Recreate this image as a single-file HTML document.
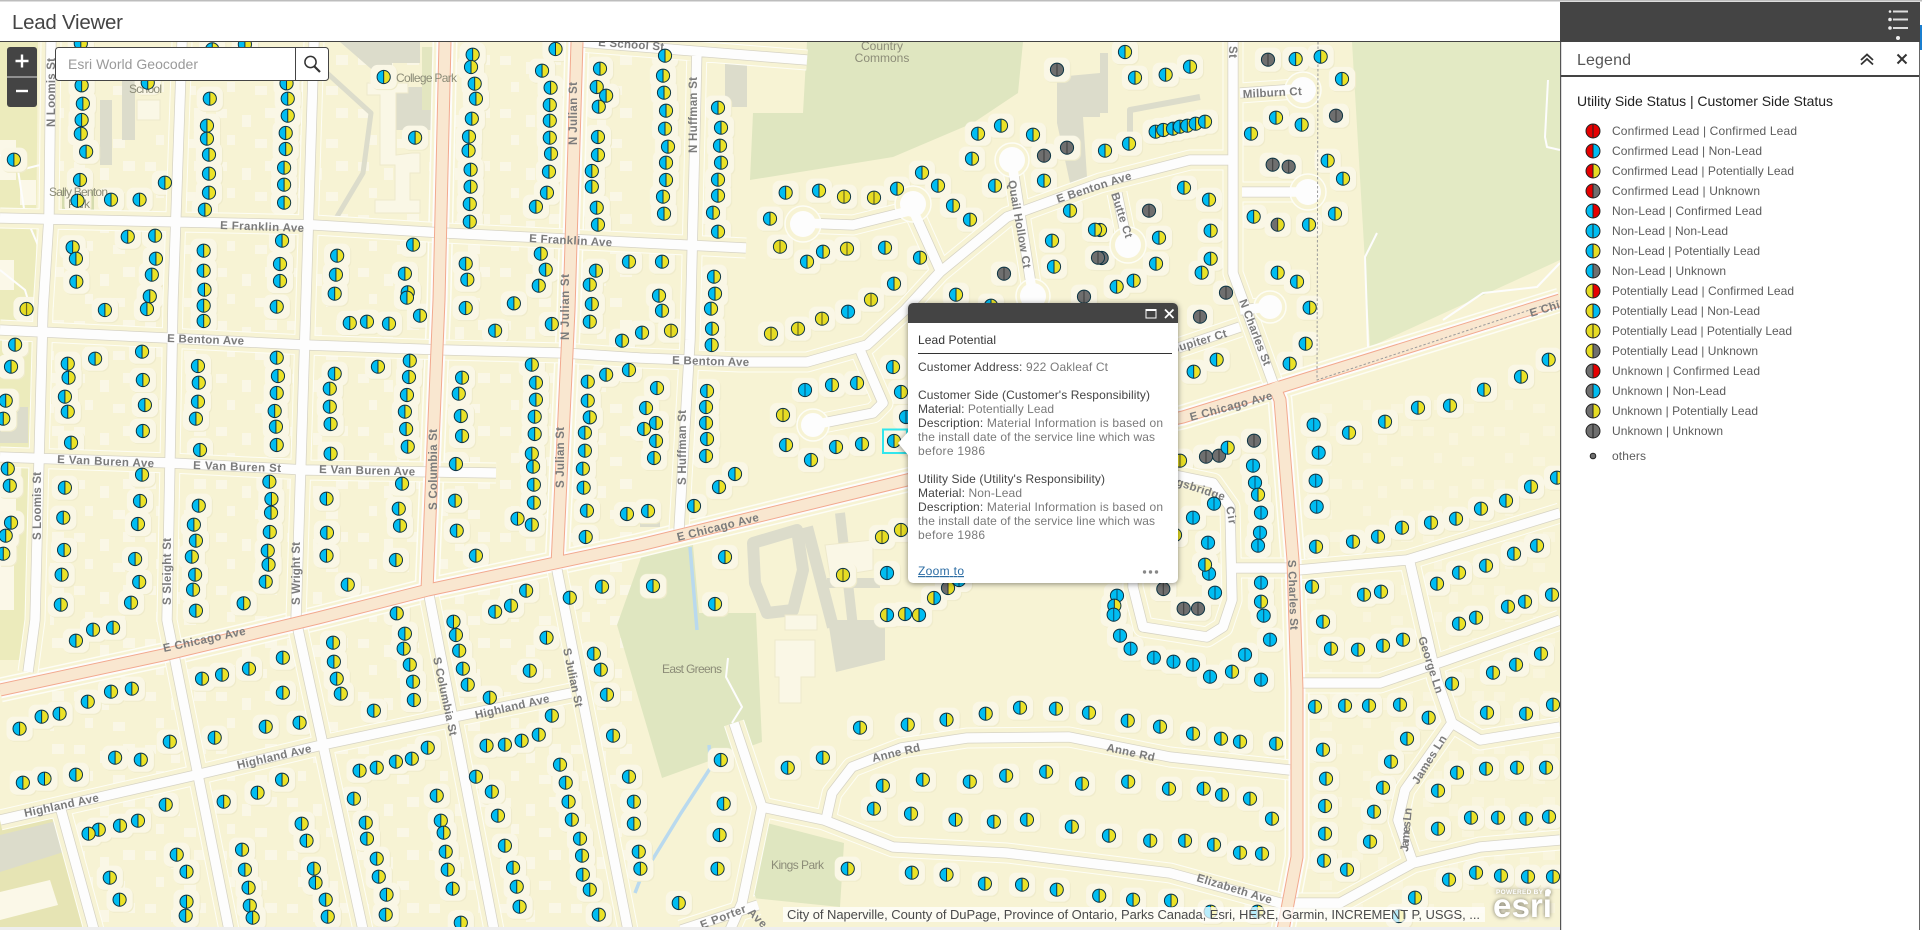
<!DOCTYPE html>
<html><head><meta charset="utf-8"><title>Lead Viewer</title>
<style>
html,body{margin:0;padding:0;background:#fff;overflow:hidden}
svg{display:block;font-family:"Liberation Sans",sans-serif}
polyline{fill:none;stroke:none}
.a{marker:url(#ma)}.b{marker:url(#mb)}.y{marker:url(#my)}.g{marker:url(#mg)}.e{marker:url(#me)}.f{marker:url(#mf)}
.p{marker:url(#pa)}.r{marker:url(#pb)}.q{marker:url(#py)}
.l{font-size:11.5px;font-weight:bold;fill:#7b7b7b}
.t{font-size:12px;fill:#8c8c78}
.d{font-size:12px;fill:#7a7a7a}
.d tspan{fill:#444}
.k{font-size:12px;fill:#444}
.g1{font-size:12px;fill:#5c5c5c}
</style></head><body>
<svg width="1922" height="930" viewBox="0 0 1922 930" xmlns="http://www.w3.org/2000/svg">
<defs>
<g id="O"><circle r="6.6" fill="none" stroke="#0c3444" stroke-width="1"/></g>
<path id="H" d="M0-6.6a6.6 6.6 0 0 1 0 13.2z"/>
<g id="A"><circle r="6.6" fill="#00bdf2"/><use href="#H" fill="#ebe228"/><path d="M0-6.6v13.2" stroke="#0c3444"/><use href="#O"/></g>
<g id="B"><circle r="6.6" fill="#00bdf2"/><path d="M0-6.6v13.2" stroke="#0b5f86" stroke-width="1.2"/><use href="#O"/></g>
<g id="Y"><circle r="6.6" fill="#e6dc24"/><path d="M0-6.6v13.2" stroke="#6e6a20" stroke-width="1.2"/><use href="#O"/></g>
<g id="G"><circle r="6.6" fill="#6f6f6f"/><path d="M0-6.6v13.2" stroke="#444" stroke-width="1.2"/><use href="#O"/></g>
<g id="E"><circle r="6.6" fill="#6f6f6f"/><use href="#H" fill="#e6dc24"/><path d="M0-6.6v13.2" stroke="#333"/><use href="#O"/></g>
<g id="F"><circle r="6.6" fill="#e6dc24"/><use href="#H" fill="#00bdf2"/><path d="M0-6.6v13.2" stroke="#0c3444"/><use href="#O"/></g>
<marker id="ma" markerUnits="userSpaceOnUse" markerWidth="1" markerHeight="1" overflow="visible" style="overflow:visible"><use href="#A" transform="scale(3)"/></marker>
<marker id="mb" markerUnits="userSpaceOnUse" markerWidth="1" markerHeight="1" overflow="visible" style="overflow:visible"><use href="#B" transform="scale(3)"/></marker>
<marker id="my" markerUnits="userSpaceOnUse" markerWidth="1" markerHeight="1" overflow="visible" style="overflow:visible"><use href="#Y" transform="scale(3)"/></marker>
<marker id="mg" markerUnits="userSpaceOnUse" markerWidth="1" markerHeight="1" overflow="visible" style="overflow:visible"><use href="#G" transform="scale(3)"/></marker>
<marker id="me" markerUnits="userSpaceOnUse" markerWidth="1" markerHeight="1" overflow="visible" style="overflow:visible"><use href="#E" transform="scale(3)"/></marker>
<marker id="mf" markerUnits="userSpaceOnUse" markerWidth="1" markerHeight="1" overflow="visible" style="overflow:visible"><use href="#F" transform="scale(3)"/></marker>
<marker id="pa" markerUnits="userSpaceOnUse" markerWidth="1" markerHeight="1" overflow="visible" style="overflow:visible"><use href="#A" transform="scale(2.45 3)"/></marker>
<marker id="pb" markerUnits="userSpaceOnUse" markerWidth="1" markerHeight="1" overflow="visible" style="overflow:visible"><use href="#B" transform="scale(2.45 3)"/></marker>
<marker id="py" markerUnits="userSpaceOnUse" markerWidth="1" markerHeight="1" overflow="visible" style="overflow:visible"><use href="#Y" transform="scale(2.45 3)"/></marker>
<filter id="halo" filterUnits="userSpaceOnUse" x="0" y="42" width="1560" height="886" color-interpolation-filters="sRGB">
<feMorphology in="SourceAlpha" operator="dilate" radius="6 5" result="d"/>
<feOffset in="d" dx="1" dy="1" result="s0"/>
<feFlood flood-color="#efebcb"/><feComposite in2="s0" operator="in" result="sh"/>
<feFlood flood-color="#faf7e6"/><feComposite in2="d" operator="in" result="bl"/>
<feMerge><feMergeNode in="sh"/><feMergeNode in="bl"/></feMerge>
</filter>
<pattern id="bld" width="71" height="53" patternUnits="userSpaceOnUse"><g fill="#faf7e6"><rect x="3" y="3" width="11" height="9"/><rect x="29" y="9" width="9" height="12"/><rect x="52" y="2" width="12" height="10"/><rect x="14" y="29" width="8" height="10"/><rect x="42" y="33" width="12" height="9"/></g></pattern>
<path id="rd" d="M0 218L314 225L445 233L746 248M580 42L807 60M0 330L167 338L306 345L445 350L563 353L640 358L740 362L807 362L867 345L905 310L940 272L1007 217L1100 183L1190 160L1233 160M0 457L171 463L306 470L496 473M0 820L196 775L322 745L449 718L571 693M51 42L49 217L43 310L39 460L35 620L28 672M182 42L173 300L167 620L229 930M314 42L306 300L296 620L363 930M697 47L690 340L679 530M428 590L494 930M557 570L628 930M61 810L94 930M1233 42L1233 273L1273 383M734 723L762 807L742 903L730 930M681 930L758 905M762 807L824 820L893 847L1007 853L1170 873L1280 903L1340 903L1413 863L1480 847L1560 840M826 820L832 793L852 767L901 748L967 738L1069 737L1170 757L1290 770M1150 470L1213 483L1230 507L1232 600L1223 627L1207 637L1143 627L1133 587L1133 500M1232 568L1293 568M1298 570L1407 560L1560 513M1410 563L1437 680L1452 723L1480 740L1560 727M1300 683L1380 683L1447 660L1560 620M1452 723L1405 790L1398 820L1413 863M1012 163L1033 297M1117 193L1128 247M803 223L853 225L913 210L940 270M813 425L873 413L883 403L860 350M1240 93L1310 88M1242 192L1313 192M1240 327L1178 348M1240 310L1270 307"/>
<path id="art" d="M0 690L163 655L318 618L428 590L640 545L907 480L1183 417L1280 387L1560 300M445 42L439 300L427 590M577 42L569 310L557 565M1273 383L1280 400L1293 560L1297 690L1297 857L1283 930"/>
<g id="M">
<g transform="scale(.40816 .33333)">
<polyline class="p" points="198,130 520,148 600,133 1158,164 1154,201 1361,147 1328,212 940,231 1163,251 1470,206 1462,261 1349,263 1485,287 1166,296 1467,320 1347,315 1156,356 1347,362 1465,411 1347,413 1017,413 1149,410 1148,452 1350,461 1465,465 1153,509 1345,515 1450,513 1153,560 1450,560 1340,578 1151,612 1313,620 1462,623 1151,665 1465,674 200,256 362,248 702,250 514,296 705,296 203,311 705,347 200,360 198,401 507,377 507,416 700,399 700,447 211,455 34,479 512,464 512,521 696,503 696,554 196,540 404,548 512,578 272,599 342,599 190,602 696,608 502,629 313,710 380,707 178,742 186,776 499,752 691,722 686,792 686,843 826,767 1012,734 1325,761 1337,809 1541,785 382,776 372,824 187,845 499,812 823,824 992,821 1141,791 1145,839 1460,812 1445,854 1320,857 367,889 501,869 820,881 999,877 997,893"/>
</g>
<g transform="translate(0 300) scale(.40816 .33333)">
<polyline class="q" points="65,27"/>
<polyline class="p" points="257,30 360,27 499,17 499,63 678,20 857,69 899,65 953,71 1029,47 1141,24 1259,10 1450,12 1445,65 1352,72 1213,92 1524,122 1541,210 37,134 348,155 233,176 166,191 678,173 485,198 1004,182 926,200 820,221 1303,194 1485,224 1132,233 1440,245 27,200 168,233 350,240 681,228 487,248 1002,231 808,266 1313,248 159,290 14,302 678,279 485,305 997,285 1124,281 1313,299 1440,302 355,315 808,320 166,335 673,333 992,335 1310,350 1129,348 1445,352 8,356 480,356 810,372 676,380 995,387 1310,402 1132,408 1433,398 350,393 174,428 678,435 999,440 1433,452 490,450 810,461 1303,461 1117,492 19,506 1428,506 1306,500 348,524 985,551 24,557 660,545 159,563 1308,554 1430,563 665,597 800,596 343,603 1115,602 1308,608 487,617 977,626 664,638 1438,632 1536,642 155,653 980,677 1268,656 27,668 338,672 475,674 1303,674 1119,692 661,696 801,698 14,707 480,722 1435,711 8,761 656,752 157,750 800,767 1166,767 470,770 970,780 331,777 658,794 151,824 478,824 341,846 651,845 852,854 473,869 1289,872 1475,860 149,914 321,908 597,910 1396,893 1252,917 1213,935 480,932 972,940"/>
</g>
<g transform="translate(0 620) scale(.40816 .33333)">
<polyline class="p" points="186,62 228,29 277,23 992,41 1117,45 1111,5 989,86 816,68 1339,53 1125,92 1455,101 693,113 818,125 1004,134 1134,146 1472,149 610,146 544,164 495,176 1298,152 825,176 1012,185 1146,194 835,221 272,215 323,206 215,245 1200,233 693,218 1014,240 1487,224 146,281 102,290 48,326 916,272 1352,287 651,320 734,308 526,353 416,365 1320,344 1278,362 1237,374 1192,377 1502,347 1048,383 282,413 345,419 1009,416 970,425 923,443 881,452 1372,434 186,464 109,476 56,488 691,479 631,518 1166,470 548,545 1541,470 1205,515 406,554 867,536 1070,527 1386,488 1553,545 1393,545 338,602 294,617 242,629 217,641 1220,587 1401,599 1080,602 739,611 896,608 1087,638 751,662 899,656 1553,611 1421,656 1237,677 1092,695 593,689 433,704 923,716 1426,707 1565,695 457,755 269,773 600,749 769,746 928,770 1097,749 1257,743 1428,764 1569,746 773,788 609,803 1109,806 1266,800 1445,809 947,824 293,839 798,839 457,845 612,857 1273,860 455,887 619,893 803,890 945,884 1467,884 1129,908"/>
</g>
<g transform="translate(640 620) scale(.40816 .33333)">
<polyline class="r" points="1176,47 1202,86 1259,113 1307,125"/>
<polyline class="p" points="198,420 205,551 195,645 190,746 95,849 539,323 656,314 751,299 847,281 931,263 1019,266 1100,278 1195,302 1274,320 448,413 362,443 595,497 693,479 808,485 897,467 995,455 1083,491 1196,485 1296,506 573,566 664,581 773,599 867,605 948,599 1058,620 1149,647 1250,662 509,746 666,758 751,764 845,791 936,794 1021,809 1125,827 1208,839 1301,842"/>
</g>
<g transform="translate(1100 40) scale(.33333)">
<polyline class="a" points="75,36 105,113 197,104 270,80 587,57 662,50 726,117 528,233 605,254 453,281 167,275 190,270 219,266 240,260 262,257 287,251 315,245 87,311 15,332 683,362 729,416 252,443 327,479 461,530 627,554 705,521 177,593 332,572 0,570 168,671 332,656 305,698 533,698 591,725 629,803 617,911 569,971 101,722 50,740 350,959 281,995 1346,959 1263,1010 1152,1049"/>
<polyline class="g" points="504,59 708,227 518,374 566,380 147,512 378,758 300,830 5,654"/>
<polyline class="e" points="533,554"/>
</g>
<g transform="translate(1180 400) scale(.33333)">
<polyline class="b" points="401,74 416,158 407,242 410,320 219,197 225,248 243,338 240,398 234,437 102,311 39,353 84,428 87,521 243,548 251,647 105,578 270,719 195,764 39,794 90,830 243,839"/>
<polyline class="g" points="222,122 78,170 117,167 54,626 11,626"/>
<polyline class="y" points="0,182"/>
<polyline class="a" points="143,143 234,284 507,98 615,65 714,23 810,17 75,494 243,605 408,440 519,425 594,410 666,383 753,368 828,356 903,326 978,302 1053,260 1131,233 396,560 552,584 603,575 429,665 453,746 534,749 609,737 669,719 771,551 837,518 918,497 1002,461 1071,437 984,620 1035,605 1116,584 837,671 888,653 156,815 816,851 939,818 1008,794 1083,761"/>
</g>
<g transform="translate(1180 690) scale(.33333)">
<polyline class="a" points="405,50 495,47 567,47 660,44 746,83 921,68 1038,71 1119,44 39,131 123,146 180,155 288,161 429,179 438,266 435,348 435,431 432,512 501,539 681,146 633,215 609,293 582,365 570,455 831,248 774,302 918,236 1011,233 1098,233 873,383 954,383 1038,386 1107,380 774,416 71,296 126,314 210,326 276,386 15,452 102,464 180,488 246,491 807,569 888,548 963,557 1044,560 1119,560 705,623 92,665 232,665 657,678"/>
</g>
<g transform="translate(640 40) scale(.33333)">
<polyline class="a" points="75,47 69,107 72,158 78,212 75,266 84,320 78,368 78,420 69,470 72,521 234,203 243,263 240,317 243,368 234,419 234,467 219,518 234,575 66,665 222,710 225,761 57,767 66,812 213,806 216,866 437,458 537,452 771,446 846,398 894,437 939,497 990,539 1014,281 1083,257 1179,284 996,356 1065,437 1212,422 1290,512 1365,569 1236,602 1242,680 390,536 549,635 501,665 735,623 840,653 762,731 948,764 1053,797 6,878"/>
<polyline class="y" points="612,470 702,473 420,620 621,626 693,779 546,836 474,866 393,881 93,872"/>
<polyline class="b" points="624,815"/>
<polyline class="g" points="1251,89 1281,323 1212,347 1092,701 1332,770 1374,653"/>
</g>
<g transform="translate(640 330) scale(.33333)">
<polyline class="a" points="215,45 51,174 18,234 48,279 12,297 48,333 42,384 201,183 198,231 198,279 201,327 198,378 285,432 237,471 162,528 24,543 759,111 783,186 651,159 576,165 588,351 666,342 438,345 513,390 762,333 255,681 39,768 225,822"/>
<polyline class="b" points="495,180 798,261 741,729"/>
<polyline class="y" points="429,255 726,621 783,600 609,735"/>
<polyline class="f" points="882,804 741,855 795,852 837,855"/>
</g>
<g transform="translate(880 570) scale(.33333)">
<polyline class="b" points="711,77"/>
<polyline class="a" points="703,107"/>
<polyline class="b" points="701,134"/>
<polyline class="g" points="850,57"/>
<polyline class="e" points="204,54"/>
<polyline class="b" points="237,30"/>
</g>
<g transform="translate(880 290) scale(.33333)"><polyline class="y" points="885,735"/></g>
</g>
</defs>

<!-- map base -->
<rect x="0" y="42" width="1560" height="885" fill="#f7f3d4"/>
<rect x="50" y="42" width="590" height="885" fill="url(#bld)"/>
<rect x="1300" y="400" width="260" height="527" fill="url(#bld)" opacity=".5"/>
<path d="M0 42H38L32 660H0z" fill="#ecebbc"/>
<path d="M0 820L60 812L92 927H0z" fill="#e6e4b4"/>
<path d="M0 835L61 820L70 850L0 872z" fill="#dcdccb"/>
<path d="M0 892L50 880L58 905L0 920z" fill="#fbf8e8"/>
<path d="M0 407H28V443H0z" fill="#dcdccb"/>
<path d="M0 140H16V180H0zM20 180H36V205H20zM0 260H14V290H0zM0 490H16V540H0zM0 560H14V610H0z" fill="#fbf8e8"/>
<path d="M0 155L20 170L40 165M18 170L25 215L0 225M25 215L40 250M0 270L25 290L28 300" fill="none" stroke="#fdfdfd" stroke-width="2"/>
<path d="M62 190H94V210H62z" fill="#d5dcae"/>

<!-- parks -->
<path d="M807 42H1023L1018 93L973 123L893 157L750 180L753 113L803 113z" fill="#dfe6c0"/>
<path d="M1352 42H1560V260L1370 347z" fill="#e3eac4"/>
<path d="M643 552L693 545L699 613L756 613L762 742L662 778L617 625z" fill="#dfe6c0"/>
<path d="M767 823L844 843L840 907L752 898z" fill="#dfe6c0"/>
<path d="M340 42H420V63H392V130H432V87H392z" fill="#dcdccb"/>
<path d="M422 47H437V110H422z" fill="#e3e6c0"/>
<path d="M122 77H135V140H122z" fill="#dcdccb"/>
<path d="M100 100H112V165H100z" fill="#dcdccb"/>
<path d="M1057 77L1100 73V117H1083L1087 177L1070 183L1057 123z" fill="#dcdccb"/>
<path d="M725 62H747V107H725z" fill="#dcdccb"/>
<path d="M1100 53H1108V113H1100z" fill="#dcdccb"/>
<path d="M640 510H660V527H640z" fill="#dcdccb"/>
<path d="M828 620H885V660L836 672z" fill="#dcdccb"/>
<g fill="none" stroke="#dcdccb" stroke-linejoin="round">
<path d="M327 73L371 113L363 173L335 220" stroke-width="5"/>
<path d="M1130 153L1130 110L1200 97" stroke-width="6"/>
<path d="M753 543L797 530L803 570L793 610L767 613L755 583z" stroke-width="12"/>
<path d="M807 527L833 627" stroke-width="12"/>
<path d="M840 513L853 627" stroke-width="10"/>
<path d="M827 583L880 583" stroke-width="10"/>
</g>
<path d="M690 547L697 630M709 745L711 767L681 813L640 880L635 893" fill="none" stroke="#b9d9ee" stroke-width="3.5"/>
<g fill="#faf7e6" stroke="#eee9cb">
<path d="M367 83H408V93H396V155L412 153H420V173H410V200H420V213H375V200H395V165H380V95H367z"/>
<path d="M137 100H160V120H137z"/>
<path d="M775 640H815V677H801V703H779V677H775z"/>
<path d="M825 545L873 540V570L830 577z"/>
<path d="M785 615H817V630H785z"/>
</g>
<!-- building halos under markers -->
<use href="#M" filter="url(#halo)"/>
<!-- roads -->
<g fill="none" stroke-linejoin="round">
<use href="#art" stroke="#fdfdf5" stroke-width="25"/><use href="#art" stroke="#f7f3d4" stroke-width="22"/>
<use href="#rd" stroke="#fdfdf5" stroke-width="21"/><use href="#rd" stroke="#f7f3d4" stroke-width="19"/>
<use href="#art" stroke="#fdfdfd" stroke-width="17"/>
<use href="#rd" stroke="#d6d3c4" stroke-width="11"/>
</g>
<g fill="#f7f3d4" stroke="#fdfdf5" stroke-width="1.5">
<circle cx="803" cy="224" r="18"/><circle cx="913" cy="204" r="18"/><circle cx="813" cy="425" r="16"/><circle cx="1012" cy="160" r="17"/><circle cx="1033" cy="296" r="17"/><circle cx="1128" cy="245" r="18"/><circle cx="1303" cy="90" r="18"/><circle cx="1308" cy="192" r="18"/><circle cx="1270" cy="307" r="16"/>
</g>
<g fill="#fdfdfd">
<circle cx="803" cy="224" r="13"/><circle cx="913" cy="204" r="13"/><circle cx="813" cy="425" r="12"/><circle cx="1012" cy="160" r="13"/><circle cx="1033" cy="296" r="13"/><circle cx="1128" cy="245" r="13"/><circle cx="1303" cy="90" r="13"/><circle cx="1308" cy="192" r="13"/><circle cx="1270" cy="307" r="12"/>
</g>
<g fill="none" stroke-linejoin="round">
<use href="#rd" stroke="#fdfdfd" stroke-width="9.5"/>
<use href="#art" stroke="#f2a98f" stroke-width="13"/>
<use href="#art" stroke="#f9e7d0" stroke-width="11"/>
<path d="M1377 233L1365 257L1368 347M1443 320L1483 293L1537 287L1560 263M1548 80L1545 137L1547 147L1560 150M728 658L726 677L742 707L732 723" stroke="#fdfdfd" stroke-width="2"/>
<path d="M1318 42L1317 380L1560 300" stroke="#9a9a9a" stroke-width="1" stroke-dasharray="2.5 2"/>
</g>

<!-- labels -->
<g>
<text class="l" transform="translate(598 46) rotate(4)" textLength="66">E School St</text>
<text class="l" transform="translate(55 127) rotate(-90)" textLength="69">N Loomis St</text>
<text class="l" transform="translate(577 145) rotate(-90)" textLength="63">N Julian St</text>
<text class="l" transform="translate(569 340) rotate(-90)" textLength="66">N Julian St</text>
<text class="l" transform="translate(220 229) rotate(2)" textLength="84">E Franklin Ave</text>
<text class="l" transform="translate(529 242) rotate(3)" textLength="83">E Franklin Ave</text>
<text class="l" transform="translate(167 342) rotate(2)" textLength="77">E Benton Ave</text>
<text class="l" transform="translate(672 364) rotate(1.5)" textLength="77">E Benton Ave</text>
<text class="l" transform="translate(1058 203) rotate(-18)" textLength="78">E Benton Ave</text>
<text class="l" transform="translate(57 463) rotate(2.5)" textLength="97">E Van Buren Ave</text>
<text class="l" transform="translate(193 469) rotate(2)" textLength="88">E Van Buren St</text>
<text class="l" transform="translate(319 473) rotate(1.5)" textLength="96">E Van Buren Ave</text>
<text class="l" transform="translate(41 540) rotate(-90)" textLength="68">S Loomis St</text>
<text class="l" transform="translate(171 605) rotate(-90)" textLength="67">S Sleight St</text>
<text class="l" transform="translate(300 605) rotate(-90)" textLength="63">S Wright St</text>
<text class="l" transform="translate(437 510) rotate(-90)" textLength="81">S Columbia St</text>
<text class="l" transform="translate(564 488) rotate(-90)" textLength="61">S Julian St</text>
<text class="l" transform="translate(433 658) rotate(78)" textLength="80">S Columbia St</text>
<text class="l" transform="translate(563 649) rotate(78)" textLength="60">S Julian St</text>
<text class="l" transform="translate(164 652) rotate(-12)" textLength="84">E Chicago Ave</text>
<text class="l" transform="translate(678 541) rotate(-14)" textLength="84">E Chicago Ave</text>
<text class="l" transform="translate(1191 421) rotate(-15)" textLength="85">E Chicago Ave</text>
<text class="l" transform="translate(1531 317) rotate(-17)" textLength="84">E Chicago Ave</text>
<text class="l" transform="translate(25 817) rotate(-12)" textLength="76">Highland Ave</text>
<text class="l" transform="translate(238 769) rotate(-13)" textLength="76">Highland Ave</text>
<text class="l" transform="translate(476 719) rotate(-13)" textLength="76">Highland Ave</text>
<text class="l" transform="translate(697 153) rotate(-90)" textLength="76">N Huffman St</text>
<text class="l" transform="translate(686 485) rotate(-90)" textLength="75">S Huffman St</text>
<text class="l" transform="translate(1008 181) rotate(80)" textLength="89">Quail Hollow Ct</text>
<text class="l" transform="translate(1111 194) rotate(72)" textLength="47">Butte Ct</text>
<text class="l" transform="translate(1243 98) rotate(-3)" textLength="59">Milburn Ct</text>
<text class="l" transform="translate(1239 301) rotate(69)" textLength="70">N Charles St</text>
<text class="l" transform="translate(1229 46) rotate(90)" textLength="12">St</text>
<text class="l" transform="translate(1174 353) rotate(-17)" textLength="56">Jupiter Ct</text>
<text class="l" transform="translate(1157 479) rotate(18)" textLength="70">Kingsbridge</text>
<text class="l" transform="translate(1226 507) rotate(80)" textLength="18">Cir</text>
<text class="l" transform="translate(1288 560) rotate(88)" textLength="70">S Charles St</text>
<text class="l" transform="translate(1418 638) rotate(72)" textLength="59">George Ln</text>
<text class="l" transform="translate(1408 852) rotate(-85)" textLength="44">James Ln</text>
<text class="l" transform="translate(1418 785) rotate(-58)" textLength="55">James Ln</text>
<text class="l" transform="translate(873 762) rotate(-13)" textLength="49">Anne Rd</text>
<text class="l" transform="translate(1106 751) rotate(12)" textLength="49">Anne Rd</text>
<text class="l" transform="translate(1196 881) rotate(17)" textLength="78">Elizabeth Ave</text>
<text class="l" transform="translate(702 929) rotate(-21)" textLength="48">E Porter</text>
<text class="l" transform="translate(747 913) rotate(45)" textLength="22">Ave</text>
<text class="t" x="49" y="196" textLength="59">Sally Benton</text>
<text class="t" x="68" y="208" textLength="22">Park</text>
<text class="t" x="129" y="93" textLength="33">School</text>
<text class="t" x="396" y="82" textLength="61">College Park</text>
<text class="t" x="882" y="50" text-anchor="middle">Country</text>
<text class="t" x="882" y="62" text-anchor="middle">Commons</text>
<text class="t" x="662" y="673" textLength="60">East Greens</text>
<text class="t" x="771" y="869" textLength="53">Kings Park</text>
</g>

<!-- markers -->
<use href="#M"/>
<!-- selection box -->
<rect x="883" y="429.5" width="24" height="23.5" fill="none" stroke="#32e6ec" stroke-width="2"/>

<!-- attribution / esri -->
<rect x="783" y="907" width="702" height="15" fill="#fff" fill-opacity=".72"/>
<text x="787" y="919" font-size="13" fill="#4a4a4a" textLength="693">City of Naperville, County of DuPage, Province of Ontario, Parks Canada, Esri, HERE, Garmin, INCREMENT P, USGS, ...</text>
<g style="filter:drop-shadow(0 0 2px rgba(0,0,0,.55))">
<text x="1496" y="894" font-size="6.5" font-weight="bold" fill="#fff" textLength="47">POWERED BY</text>
<circle cx="1548" cy="892" r="3" fill="#fff"/>
<text x="1493" y="917" font-size="33" font-weight="bold" fill="#fff" textLength="59" lengthAdjust="spacingAndGlyphs">esri</text>
</g>
<rect x="0" y="927" width="1560" height="3" fill="#eeeeee"/>

<!-- header -->
<rect x="0" y="0" width="1922" height="41" fill="#fff"/>
<rect x="0" y="0" width="1922" height="1.5" fill="#bdbdbd"/>
<rect x="0" y="41" width="1560" height="1" fill="#444"/>
<text x="12" y="29" font-size="20.5" fill="#444" textLength="111">Lead Viewer</text>

<!-- zoom -->
<rect x="7" y="47" width="30" height="60" rx="3" fill="#444"/>
<rect x="7" y="76.5" width="30" height="1" fill="#ddd"/>
<path d="M22 54.5v13M15.5 61h13" stroke="#fff" stroke-width="2.4"/>
<path d="M16 91h12" stroke="#fff" stroke-width="2.4"/>

<!-- search -->
<rect x="55.5" y="47.5" width="273" height="33" rx="3" fill="#fff" stroke="#444"/>
<path d="M295.5 48v32" stroke="#444"/>
<text x="68" y="69" font-size="14" fill="#9a9a9a" textLength="130">Esri World Geocoder</text>
<circle cx="310.5" cy="62" r="5.6" fill="none" stroke="#333" stroke-width="1.5"/>
<path d="M314.5 66.5L320 72" stroke="#333" stroke-width="2.2"/>

<!-- popup -->
<g style="filter:drop-shadow(0 1px 3px rgba(0,0,0,.45))">
<path d="M908 432L898 443L908 455z" fill="#fff"/>
<rect x="908" y="303" width="270" height="280" rx="5" fill="#fff"/>
<path d="M908 323V308a5 5 0 0 1 5-5H1173a5 5 0 0 1 5 5V323z" fill="#444"/>
</g>
<rect x="1146" y="309.5" width="10" height="8.5" fill="none" stroke="#fff" stroke-width="1"/><rect x="1146" y="309" width="10" height="2" fill="#fff"/>
<path d="M1165 309.5l8.5 8.5M1173.5 309.5L1165 318" stroke="#fff" stroke-width="1.8"/>
<text x="918" y="344" font-size="12" fill="#333" textLength="78">Lead Potential</text>
<rect x="918" y="353" width="254" height="1" fill="#333"/>
<text class="d" x="918" y="371" textLength="190"><tspan>Customer Address:</tspan> 922 Oakleaf Ct</text>
<text class="k" x="918" y="399" textLength="232">Customer Side (Customer's Responsibility)</text>
<text class="d" x="918" y="413" textLength="136"><tspan>Material:</tspan> Potentially Lead</text>
<text class="d" x="918" y="427" textLength="245"><tspan>Description:</tspan> Material Information is based on</text>
<text class="d" x="918" y="441" textLength="237">the install date of the service line which was</text>
<text class="d" x="918" y="455" textLength="67">before 1986</text>
<text class="k" x="918" y="483" textLength="187">Utility Side (Utility's Responsibility)</text>
<text class="d" x="918" y="497" textLength="104"><tspan>Material:</tspan> Non-Lead</text>
<text class="d" x="918" y="511" textLength="245"><tspan>Description:</tspan> Material Information is based on</text>
<text class="d" x="918" y="525" textLength="237">the install date of the service line which was</text>
<text class="d" x="918" y="539" textLength="67">before 1986</text>
<text x="918" y="575" font-size="12" fill="#2b6ca3" text-decoration="underline" textLength="46">Zoom to</text>
<circle cx="1144.5" cy="572" r="1.7" fill="#888"/><circle cx="1150.5" cy="572" r="1.7" fill="#888"/><circle cx="1156.5" cy="572" r="1.7" fill="#888"/>

<!-- right panel -->
<rect x="1560" y="2" width="360" height="40" fill="#444"/>
<rect x="1920" y="25" width="2" height="25" fill="#1a7fd0"/>
<path d="M1893 11.5h15M1893 19.5h15M1893 28h15" stroke="#ddd" stroke-width="2"/>
<circle cx="1890" cy="11.5" r="1.3" fill="#eee"/><circle cx="1890" cy="19.5" r="1.8" fill="#eee"/><circle cx="1890" cy="28" r="1.8" fill="#eee"/><circle cx="1898" cy="38" r="2" fill="#eee"/>
<rect x="1560" y="42" width="360" height="888" fill="#fff"/>
<rect x="1560" y="42" width="1.2" height="888" fill="#555"/>
<rect x="1919" y="42" width="1" height="888" fill="#666"/>
<rect x="1561" y="75" width="358" height="2" fill="#444"/>
<text x="1577" y="65" font-size="16" fill="#555" textLength="54">Legend</text>
<path d="M1861 60l6-5.500 6 5.500M1861 64.500l6-5.500 6 5.500" fill="none" stroke="#333" stroke-width="1.800"/>
<path d="M1897.500 54.500l9 9M1906.500 54.500l-9 9" stroke="#333" stroke-width="2"/>
<text x="1577" y="106" font-size="14" fill="#222" textLength="256">Utility Side Status | Customer Side Status</text>

<defs>
<path id="LH" d="M0-7a7 7 0 0 1 0 14z"/>
<g id="LO"><path d="M0-7v14" stroke="#222" stroke-width="1"/><circle r="7" fill="none" stroke="#222" stroke-width="1"/></g>
</defs>
<g transform="translate(1593 131)"><circle r="7" fill="#e60000"/><use href="#LH" fill="#e60000"/><use href="#LO"/></g>
<g transform="translate(1593 151)"><circle r="7" fill="#e60000"/><use href="#LH" fill="#00bdf2"/><use href="#LO"/></g>
<g transform="translate(1593 171)"><circle r="7" fill="#e60000"/><use href="#LH" fill="#e6dc24"/><use href="#LO"/></g>
<g transform="translate(1593 191)"><circle r="7" fill="#e60000"/><use href="#LH" fill="#6f6f6f"/><use href="#LO"/></g>
<g transform="translate(1593 211)"><circle r="7" fill="#00bdf2"/><use href="#LH" fill="#e60000"/><use href="#LO"/></g>
<g transform="translate(1593 231)"><circle r="7" fill="#00bdf2"/><use href="#LH" fill="#00bdf2"/><use href="#LO"/></g>
<g transform="translate(1593 251)"><circle r="7" fill="#00bdf2"/><use href="#LH" fill="#e6dc24"/><use href="#LO"/></g>
<g transform="translate(1593 271)"><circle r="7" fill="#00bdf2"/><use href="#LH" fill="#6f6f6f"/><use href="#LO"/></g>
<g transform="translate(1593 291)"><circle r="7" fill="#e6dc24"/><use href="#LH" fill="#e60000"/><use href="#LO"/></g>
<g transform="translate(1593 311)"><circle r="7" fill="#e6dc24"/><use href="#LH" fill="#00bdf2"/><use href="#LO"/></g>
<g transform="translate(1593 331)"><circle r="7" fill="#e6dc24"/><use href="#LH" fill="#e6dc24"/><use href="#LO"/></g>
<g transform="translate(1593 351)"><circle r="7" fill="#e6dc24"/><use href="#LH" fill="#6f6f6f"/><use href="#LO"/></g>
<g transform="translate(1593 371)"><circle r="7" fill="#6f6f6f"/><use href="#LH" fill="#e60000"/><use href="#LO"/></g>
<g transform="translate(1593 391)"><circle r="7" fill="#6f6f6f"/><use href="#LH" fill="#00bdf2"/><use href="#LO"/></g>
<g transform="translate(1593 411)"><circle r="7" fill="#6f6f6f"/><use href="#LH" fill="#e6dc24"/><use href="#LO"/></g>
<g transform="translate(1593 431)"><circle r="7" fill="#6f6f6f"/><use href="#LH" fill="#6f6f6f"/><use href="#LO"/></g>
<circle cx="1593" cy="456" r="2.8" fill="#6f6f6f" stroke="#222"/>
<text class="g1" x="1612" y="135" textLength="185">Confirmed Lead | Confirmed Lead</text>
<text class="g1" x="1612" y="155" textLength="150">Confirmed Lead | Non-Lead</text>
<text class="g1" x="1612" y="175" textLength="182">Confirmed Lead | Potentially Lead</text>
<text class="g1" x="1612" y="195" textLength="148">Confirmed Lead | Unknown</text>
<text class="g1" x="1612" y="215" textLength="150">Non-Lead | Confirmed Lead</text>
<text class="g1" x="1612" y="235" textLength="116">Non-Lead | Non-Lead</text>
<text class="g1" x="1612" y="255" textLength="148">Non-Lead | Potentially Lead</text>
<text class="g1" x="1612" y="275" textLength="114">Non-Lead | Unknown</text>
<text class="g1" x="1612" y="295" textLength="182">Potentially Lead | Confirmed Lead</text>
<text class="g1" x="1612" y="315" textLength="148">Potentially Lead | Non-Lead</text>
<text class="g1" x="1612" y="335" textLength="180">Potentially Lead | Potentially Lead</text>
<text class="g1" x="1612" y="355" textLength="146">Potentially Lead | Unknown</text>
<text class="g1" x="1612" y="375" textLength="148">Unknown | Confirmed Lead</text>
<text class="g1" x="1612" y="395" textLength="114">Unknown | Non-Lead</text>
<text class="g1" x="1612" y="415" textLength="146">Unknown | Potentially Lead</text>
<text class="g1" x="1612" y="435" textLength="111">Unknown | Unknown</text>
<text class="g1" x="1612" y="460" textLength="34">others</text>
</svg>
</body></html>
